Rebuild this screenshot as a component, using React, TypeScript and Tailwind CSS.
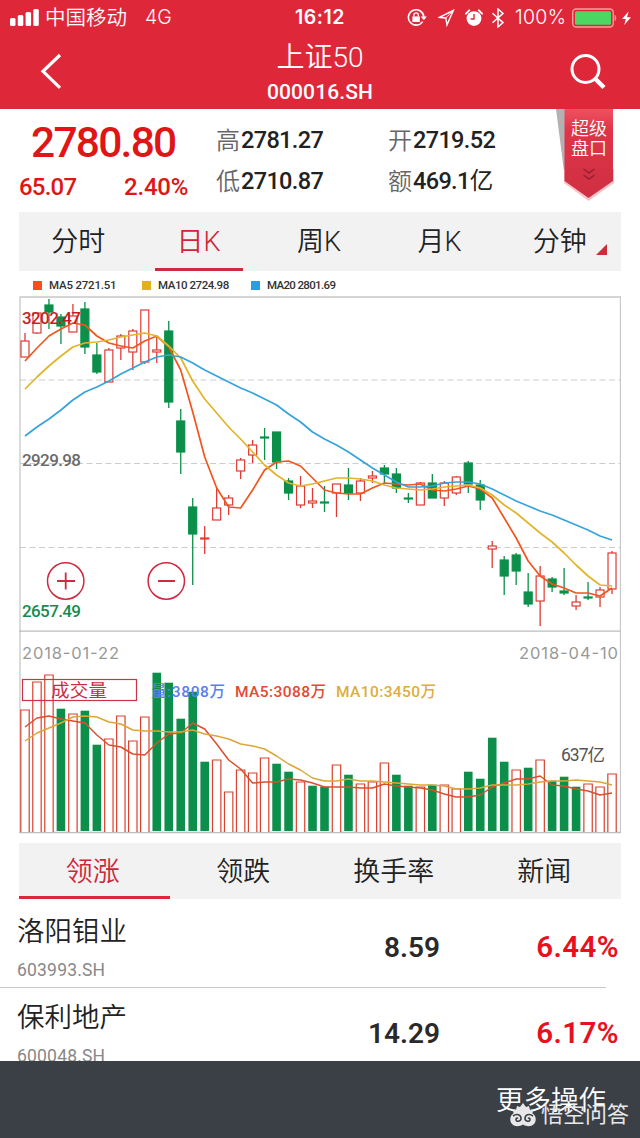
import { clsx } from 'clsx'

// [high, body top, body bottom, low, up?]
const candles: [number, number, number, number, number][] = [
  [333, 341, 357, 357, 1], [313, 313, 333, 334, 1], [299, 305, 312, 329, 0], [314, 317, 326, 344, 0], [304, 316, 332, 332, 1],
  [302, 309, 347, 354, 0], [343, 355, 372, 374, 0], [348, 350, 382, 382, 1], [334, 336, 348, 360, 1], [329, 331, 352, 370, 1],
  [310, 310, 362, 364, 1], [336, 350, 352, 363, 1], [321, 331, 402, 408, 0], [409, 421, 452, 474, 0], [498, 507, 534, 585, 0],
  [526, 538, 539, 554, 1], [488, 508, 520, 520, 1], [495, 498, 505, 515, 1], [458, 460, 471, 479, 1], [440, 445, 455, 463, 1],
  [428, 437, 438, 460, 0], [432, 432, 462, 469, 0], [478, 481, 493, 500, 0], [476, 486, 505, 508, 1], [488, 501, 503, 508, 1],
  [486, 502, 503, 512, 0], [484, 484, 493, 517, 1], [468, 485, 493, 500, 0], [478, 481, 493, 501, 1], [471, 476, 478, 483, 1],
  [465, 468, 474, 483, 0], [468, 474, 488, 493, 0], [493, 498, 499, 503, 0], [482, 483, 505, 505, 1], [474, 483, 498, 498, 0],
  [481, 483, 498, 506, 1], [476, 477, 493, 495, 1], [461, 463, 484, 493, 0], [480, 485, 500, 510, 0], [541, 546, 549, 568, 1],
  [556, 560, 576, 595, 0], [553, 555, 571, 585, 0], [573, 592, 604, 607, 0], [566, 576, 601, 626, 1], [577, 579, 587, 592, 0],
  [568, 591, 593, 595, 0], [595, 602, 606, 610, 1], [582, 597, 598, 600, 0], [587, 590, 597, 607, 1], [551, 553, 589, 594, 1],
]

const ma5 = [361, 348, 336, 329, 323, 325, 336, 343, 346, 348, 341, 336, 347, 370, 412, 457, 488, 507, 508, 490, 470, 462, 461, 466, 478, 490, 493, 494, 494, 488, 483, 484, 485, 484, 490, 491, 489, 486, 489, 498, 518, 538, 561, 576, 584, 588, 593, 593, 596, 588]
const ma10 = [389, 377, 366, 356, 347, 343, 342, 340, 337, 335, 333, 336, 346, 358, 381, 399, 413, 427, 439, 452, 465, 475, 483, 486, 484, 481, 478, 478, 479, 481, 485, 488, 489, 490, 489, 487, 486, 485, 488, 495, 505, 513, 523, 533, 542, 553, 565, 576, 585, 586]
const ma20 = [436, 427, 419, 410, 400, 392, 387, 381, 374, 368, 362, 357, 355, 357, 363, 370, 376, 382, 388, 393, 399, 405, 414, 422, 432, 439, 445, 452, 460, 468, 475, 482, 487, 487, 486, 483, 482, 482, 484, 489, 495, 501, 506, 511, 515, 520, 525, 530, 536, 540]

const volumes = [710, 682, 675, 709, 714, 711, 745, 739, 716, 741, 717, 673, 683, 719, 692, 762, 760, 792, 770, 773, 758, 764, 772, 782, 786, 787, 765, 775, 784, 782, 763, 775, 786, 787, 785, 785, 789, 772, 779, 738, 762, 770, 768, 760, 781, 777, 787, 784, 787, 774]
const volumeDown = [3, 5, 6, 11, 12, 13, 14, 15, 21, 22, 24, 25, 27, 31, 32, 34, 37, 38, 39, 40, 42, 44, 45, 46]
const vol5 = [727, 718, 716, 719, 721, 723, 735, 745, 747, 754, 755, 743, 734, 733, 723, 729, 744, 760, 769, 783, 782, 782, 779, 780, 783, 787, 787, 787, 788, 788, 784, 786, 787, 788, 790, 794, 797, 797, 795, 787, 783, 779, 779, 776, 785, 786, 789, 791, 795, 793]
const vol10 = [741, 733, 728, 723, 717, 716, 717, 722, 724, 730, 731, 731, 732, 732, 730, 734, 736, 739, 744, 746, 749, 756, 764, 770, 778, 781, 781, 779, 781, 781, 782, 783, 784, 785, 785, 786, 789, 789, 788, 785, 785, 785, 784, 782, 781, 781, 780, 781, 782, 785]

const xAt = (i: number) => 25 + i * 11.98
const points = (ys: number[]) => ys.map((y, i) => `${xAt(i)},${y}`).join(' ')

const RED = '#e03a34'
const GREEN = '#0b8f4a'

const periods = ['分时', '日K', '周K', '月K', '分钟']
const lists = ['领涨', '领跌', '换手率', '新闻']
const stocks = [
  { name: '洛阳钼业', code: '603993.SH', price: '8.59', change: '6.44%' },
  { name: '保利地产', code: '600048.SH', price: '14.29', change: '6.17%' },
]

function StatusBar() {
  return (
    <div className="relative flex h-9 items-center pl-2.5 pr-[9px] text-[18px]">
      <svg width="29" height="18" viewBox="0 0 29 18" fill="#fff">
        <rect x="0" y="9" width="5.5" height="8" rx="1.5" />
        <rect x="7.8" y="6" width="5.5" height="11" rx="1.5" />
        <rect x="15.6" y="3" width="5.5" height="14" rx="1.5" />
        <rect x="23.3" y="0" width="5.5" height="17" rx="1.5" />
      </svg>
      <span className="ml-1.5 w-[83px] whitespace-nowrap text-[20.5px] font-[350]">中国移动</span>
      <span className="ml-[17px] font-[Inter] text-[19.5px] font-[350]">4G</span>
      <span className="absolute left-[295px] font-[Inter] text-[19.5px] font-semibold tracking-[0.5px]">16:12</span>
      <div className="ml-auto flex items-center">
        <svg width="20" height="20" viewBox="0 0 20 20" fill="none" stroke="#fff" strokeWidth="1.6">
          <path d="M15.6 13.6A7.7 7.7 0 1 1 16.8 9" />
          <path d="M13.8 8.6h6l-3 3.6z" fill="#fff" stroke="none" />
          <rect x="5.4" y="8.4" width="7.4" height="5.6" fill="#fff" stroke="none" />
          <path d="M6.9 8.6V7a2.2 2.2 0 0 1 4.4 0v1.6" strokeWidth="1.3" />
        </svg>
        <svg className="ml-[11px]" width="17" height="18" viewBox="0 0 17 18" fill="none" stroke="#fff" strokeWidth="1.4">
          <path d="M15.3 1.5 1.5 8.4l6.3.6 1.2 6.9z" />
          <path d="M15.3 1.5 7.8 9" strokeWidth="1" />
        </svg>
        <svg className="ml-2.5" width="18" height="18" viewBox="0 0 18 18">
          <circle cx="9" cy="9.6" r="7.4" fill="#fff" />
          <path d="M1 4.6 4.2 1.4M17 4.6 13.8 1.4" stroke="#fff" strokeWidth="2" strokeLinecap="round" />
          <path d="M9 5v5H5.6" stroke="#de283a" strokeWidth="1.4" fill="none" />
        </svg>
        <svg className="ml-2" width="14" height="20" viewBox="0 0 14 20" fill="none" stroke="#fff" strokeWidth="1.5">
          <path d="m1.5 5.2 10.5 9.4L7 19V1l5 4.4-10.5 9.4" />
        </svg>
        <span className="ml-2.5 w-[57px] whitespace-nowrap font-[Inter] text-[19.5px] font-[350] tracking-[0.3px]">100%</span>
        <svg width="50" height="20" viewBox="0 0 50 20">
          <rect x="0.7" y="1" width="40.600" height="18" rx="3.5" fill="none" stroke="#f3a09b" strokeWidth="1.4" />
          <rect x="3" y="3.2" width="36" height="13.6" rx="1.5" fill="#4cd763" />
          <path d="M42.6 6.8c2.2 1 2.2 5.4 0 6.4z" fill="#f3a09b" />
        </svg>
        <svg width="9" height="17" viewBox="0 0 11 17" fill="#fff">
          <path d="M8 0 0 9h4.6L2.8 16.5 11 7H6.2z" />
        </svg>
      </div>
    </div>
  )
}

function Header() {
  return (
    <header className="h-[109px] bg-[#de283a] text-white">
      <StatusBar />
      <div className="flex h-[73px] items-start justify-between">
        <svg className="ml-10 mt-[17px]" width="22" height="37" viewBox="0 0 22 37" fill="none" stroke="#fff" strokeWidth="3.2">
          <path d="M20 2 3 18.3 20 34.8" />
        </svg>
        <div className="ml-2 text-center">
          <h1 className="mt-[3px] text-[28px] font-[350] leading-[38px]">上证50</h1>
          <p className="-mt-px text-[21px] font-medium leading-8 tracking-[0.1px]">000016.SH</p>
        </div>
        <svg className="mr-[34px] mt-[17px]" width="36" height="37" viewBox="0 0 36 37" fill="none" stroke="#fff">
          <circle cx="15.5" cy="16" r="13.5" strokeWidth="3" />
          <path d="m25 25.5 9 9" strokeWidth="4.5" />
        </svg>
      </div>
    </header>
  )
}

function Stat({ label, value, unit }: { label: string; value: string; unit?: string }) {
  return (
    <div className="flex h-[41px] items-center whitespace-nowrap">
      <span className="w-[25px] text-[24px] font-[350] text-[#666]">{label}</span>
      <span className="text-[23.5px] font-medium tracking-[-0.65px] text-[#222]">
        {value}
        {unit && <span className="font-normal">{unit}</span>}
      </span>
    </div>
  )
}

function Quote() {
  return (
    <section className="relative flex h-[103px]">
      <div className="w-[216px] pl-[19px] text-[#e01515]">
        <div className="ml-3 mt-2.5 text-[42.5px] font-medium leading-[48px] tracking-[-1.75px]">2780.80</div>
        <div className="mt-1 flex text-[24px] font-medium leading-8 tracking-[-0.8px]">
          <span className="w-[105px]">65.07</span>
          <span className="tracking-[-0.2px]">2.40%</span>
        </div>
      </div>
      <div className="w-[172px] pt-[11px]">
        <Stat label="高" value="2781.27" />
        <Stat label="低" value="2710.87" />
      </div>
      <div className="pt-[11px]">
        <Stat label="开" value="2719.52" />
        <Stat label="额" value="469.1" unit="亿" />
      </div>
      <div className="absolute left-[556px] top-0 h-[94px] w-[58px]">
        <svg width="58" height="94" viewBox="0 0 58 94">
          <defs>
            <linearGradient id="ribbon" x1="0" y1="0" x2="0" y2="1">
              <stop offset="0" stopColor="#ee5160" />
              <stop offset="0.25" stopColor="#de3448" />
              <stop offset="1" stopColor="#cf2f42" />
            </linearGradient>
          </defs>
          <path d="M0 0h9v70z" fill="#b5b0b1" />
          <path d="M8 60v14l24.500 18L58 74V60z" fill="#fac3c9" />
          <path d="M8.500 0H57v72L32.500 89 8.500 72z" fill="url(#ribbon)" />
          <path d="m27.500 60 5.500 4 5.500-4M27.500 66l5.500 4 5.500-4" fill="none" stroke="#96202f" strokeWidth="1.500" />
        </svg>
        <div className="absolute left-[15px] top-2.5 text-[18px] font-[350] leading-5 text-white">
          超级
          <br />
          盘口
        </div>
      </div>
    </section>
  )
}

function PeriodTabs() {
  return (
    <nav className="mx-[19px] flex h-[59px] bg-[#f2f2f2] text-[27px] font-[350]">
      {periods.map((p, i) => (
        <div key={p} className={clsx('relative flex flex-1 justify-center pr-0.5 leading-[60px]', i === 1 ? 'text-[#cf2539]' : 'text-[#222]')}>
          {p}
          {i === 1 && <span className="absolute bottom-0 h-[3px] w-[88px] bg-[#cb2b3c]" />}
          {i === 4 && (
            <svg className="absolute bottom-4 right-3.5" width="11" height="11" viewBox="0 0 11 11">
              <path d="M11 0v11H0z" fill="#d02b3d" />
            </svg>
          )}
        </div>
      ))}
    </nav>
  )
}

function Legend() {
  return (
    <div className="flex h-[25px] items-center pl-[33px] pt-1 text-[11.5px] font-medium text-[#333]">
      <span className="flex w-[109px] items-center gap-[7px] whitespace-nowrap tracking-[-0.2px]">
        <i className="size-[9px] bg-[#f5501a]" />MA5 2721.51
      </span>
      <span className="flex w-[109px] items-center gap-[7px] whitespace-nowrap tracking-[-0.45px]">
        <i className="size-[9px] bg-[#e0b01e]" />MA10 2724.98
      </span>
      <span className="flex items-center gap-[7px] whitespace-nowrap tracking-[-0.65px]">
        <i className="size-[9px] bg-[#2a9fe0]" />MA20 2801.69
      </span>
    </div>
  )
}

function Chart() {
  return (
    <svg className="mx-[19px] block" width="602" height="538" viewBox="19 296 602 538">
      {[380, 463.5, 547.5].map((y) => (
        <path key={y} d={`M20 ${y}H620`} stroke="#ccc" strokeWidth="1" strokeDasharray="6 3.500" />
      ))}
      <path d="M20 833V297H620.500V833" fill="none" stroke="#c8c8c8" strokeWidth="1.300" />
      <path d="M19 631.200H621M19 832.500H621" stroke="#bdbdbd" strokeWidth="1.300" />

      {candles.map(([high, top, bottom, low, up], i) => {
        const x = xAt(i)
        const color = up ? RED : GREEN
        return (
          <g key={i} stroke={color}>
            <path d={`M${x} ${high}V${top}M${x} ${bottom}V${low}`} strokeWidth="1.300" />
            <rect x={x - 4} y={top} width="8" height={bottom - top} fill={up ? '#fff' : color} strokeWidth="1.200" />
          </g>
        )
      })}
      <g fill="none" strokeWidth="1.700" strokeLinejoin="round">
        <polyline points={points(ma5)} stroke="#f0561e" />
        <polyline points={points(ma10)} stroke="#e2b429" />
        <polyline points={points(ma20)} stroke="#36a3dc" />
      </g>

      <g fontSize="17" fontWeight="500">
        <text x="22" y="323.500" fill="#c81e1e" textLength="59">3202.47</text>
        <text x="22" y="466" fill="#6a6a6a" textLength="59">2929.98</text>
        <text x="22" y="617" fill="#158c4c" textLength="59">2657.49</text>
      </g>
      <g className="font-[Inter]" fontSize="16.500" fill="#999">
        <text x="22" y="659" textLength="97">2018-01-22</text>
        <text x="519" y="659" textLength="99">2018-04-10</text>
      </g>

      <g fill="#fff" stroke="#cf2a40" strokeWidth="1.500">
        <circle cx="65.700" cy="581" r="18.200" />
        <circle cx="166.300" cy="581" r="18.200" />
        <path d="M57 581H75M65.700 572.500V589.500M158 581H175" strokeWidth="1.800" />
      </g>

      {volumes.map((y, i) => {
        const x = xAt(i)
        return volumeDown.includes(i) ? (
          <rect key={i} x={x - 4.300} y={y - 0.300} width="8.600" height={831.300 - y} fill={GREEN} />
        ) : (
          <path key={i} d={`M${x - 4.200} 832V${y}H${x + 4.200}V832`} fill="#fff" stroke="#d9422f" strokeWidth="1.200" />
        )
      })}
      <g fill="none" strokeWidth="1.500" strokeLinejoin="round">
        <polyline points={points(vol5)} stroke="#dc4f2e" />
        <polyline points={points(vol10)} stroke="#dba63a" />
      </g>
      <rect x="22.500" y="679.500" width="114" height="21" fill="none" stroke="#cc3345" strokeWidth="1.200" />
      <text x="51" y="696.500" fontSize="18.500" fill="#cc2c3f" textLength="56">成交量</text>
      <g fontSize="15.500" fontWeight="500">
        <text x="151" y="697" fill="#5b7df0" textLength="74">量:3808万</text>
        <text x="235" y="697" fill="#e24a33" textLength="91">MA5:3088万</text>
        <text x="336" y="697" fill="#dcae3c" textLength="100">MA10:3450万</text>
      </g>
      <text x="561" y="761" fontSize="17.500" fill="#555" textLength="44">637亿</text>
    </svg>
  )
}

function ListTabs() {
  return (
    <nav className="mx-[19px] mt-[9px] flex h-14 bg-[#f2f2f2] text-[27px] font-[350]">
      {lists.map((t, i) => (
        <div
          key={t}
          className={clsx('flex-1 border-b-[3px] pr-[3px] text-center leading-[58px]', i === 0 ? 'border-[#dd2639] text-[#cf2539]' : 'border-transparent text-[#222]')}
        >
          {t}
        </div>
      ))}
    </nav>
  )
}

function StockList() {
  return (
    <section className="h-[162px] overflow-hidden pt-[3px]">
      {stocks.map((s) => (
        <div key={s.code} className="mr-[34px] h-[86px] border-b border-[#c8c8c8]">
          <div className="flex h-[85px] w-[640px] pl-[17px]">
            <div className="w-[183px] pt-2.5">
              <div className="text-[27.5px] font-[350] leading-10 text-[#222]">{s.name}</div>
              <div className="mt-1 text-[17.5px] leading-7 tracking-[0.2px] text-[#888]">{s.code}</div>
            </div>
            <div className="w-[240px] text-right text-[28px] font-semibold leading-[91px] text-[#2a2a2a]">{s.price}</div>
            <div className="w-[179px] text-right text-[29.5px] font-semibold leading-[91px] tracking-[0.4px] text-[#e8101c]">{s.change}</div>
          </div>
        </div>
      ))}
    </section>
  )
}

function Footer() {
  return (
    <footer className="relative h-[77px] bg-[#3b4047] text-white">
      <div className="pl-[496px] pt-5 text-[27.5px] font-[350] leading-10">更多操作</div>
      <div className="absolute left-[510px] top-[41px] flex items-center gap-[5px] text-[#e8e8e8]">
        <svg width="26" height="25" viewBox="0 0 26 25">
          <path d="M13 1l3 4 3-1 1 4 3-.5-.5 4c4 2 4 8 1.500 10.500-3 3-7.500 2.500-11 .5-3.500 2-8 2.500-11-.5C-.5 19.500-.5 13.500 3.500 11.500l-.5-4 3 .5 1-4 3 1z" fill="#e8e8e8" />
          <path d="M3 14c4-3 8-1 8 2.500 0 3-5 4-5 1 0-1 1-2 2-1M23 14c-4-3-8-1-8 2.500 0 3 5 4 5 1 0-1-1-2-2-1" fill="none" stroke="#3b4047" strokeWidth="1.600" />
        </svg>
        <span className="text-[22px] leading-6">悟空问答</span>
      </div>
    </footer>
  )
}

export default function App() {
  return (
    <div className="h-[1138px] w-[640px] overflow-hidden bg-white font-[Roboto,'Noto_Sans_CJK_SC',sans-serif]">
      <Header />
      <Quote />
      <PeriodTabs />
      <Legend />
      <Chart />
      <ListTabs />
      <StockList />
      <Footer />
    </div>
  )
}
